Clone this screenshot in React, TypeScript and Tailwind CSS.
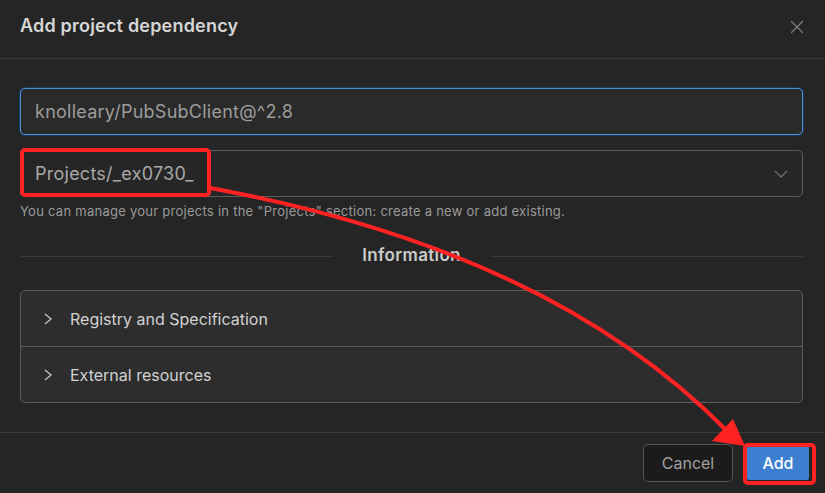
import React from "react";

export default function App() {
  return (
    <div
      className="relative w-[825px] h-[493px] bg-[#252525] overflow-hidden flex flex-col"
      style={{ fontFamily: "Inter, 'Noto Sans', sans-serif" }}
    >
      {/* Header */}
      <div className="h-[59px] shrink-0 flex items-center justify-between pl-5 pr-[20px] pb-[8px] border-b border-[#3a3a3a]">
        <div className="text-[18px] font-semibold text-[#d6d6d6] tracking-[0.2px]">Add project dependency</div>
        <svg width="14" height="14" viewBox="0 0 14 14" className="mr-[1px] mt-[4px]">
          <path d="M1.5 1.5 L12.5 12.5 M12.5 1.5 L1.5 12.5" stroke="#7a7a7a" strokeWidth="1.4" strokeLinecap="round" />
        </svg>
      </div>

      {/* Body */}
      <div className="flex-1 flex flex-col pl-5 pr-[22px] pt-[29px]">
        <div className="h-[47px] rounded-[5px] border border-[#4b8fdb] bg-[#2a2a2a] shadow-[0_0_0_1px_#1f3a5c] flex items-center pl-[14px]">
          <span className="text-[18px] text-[#9c9c9c] tracking-[0.25px]">knolleary/PubSubClient@^2.8</span>
        </div>

        <div className="mt-[15px] h-[47px] rounded-[5px] border border-[#5c5c5c] bg-[#262626] flex items-center justify-between pl-[14px] pr-[14px]">
          <span className="text-[18px] text-[#a8a8a8] tracking-[0.25px]">Projects/_ex0730_</span>
          <svg width="14" height="8" viewBox="0 0 14 8">
            <path d="M1 1 L7 7 L13 1" fill="none" stroke="#707070" strokeWidth="1.3" />
          </svg>
        </div>

        <div className="mt-[6px] text-[13px] leading-[16px] text-[#9a9a9a] tracking-[0.26px]">
          You can manage your projects in the "Projects" section: create a new or add existing.
        </div>

        <div className="mt-[25px] h-[24px] flex items-center">
          <div className="flex-1 h-px bg-[#3a3a3a]" />
          <div className="px-[29px] text-[17px] font-semibold text-[#cbcbcb] tracking-[0.35px]">Information</div>
          <div className="flex-1 h-px bg-[#3a3a3a]" />
        </div>

        <div className="mt-[22px] rounded-[5px] border border-[#5c5c5c] bg-[#2d2d2d] flex flex-col">
          <div className="h-[56px] flex items-center pl-[22px] border-b border-[#5c5c5c]">
            <svg width="10" height="12" viewBox="0 0 10 12">
              <path d="M2 1 L8 6 L2 11" fill="none" stroke="#c8c8c8" strokeWidth="1.3" />
            </svg>
            <span className="ml-[17px] text-[16px] text-[#d2d2d2]">Registry and Specification</span>
          </div>
          <div className="h-[55px] flex items-center pl-[22px]">
            <svg width="10" height="12" viewBox="0 0 10 12">
              <path d="M2 1 L8 6 L2 11" fill="none" stroke="#c8c8c8" strokeWidth="1.3" />
            </svg>
            <span className="ml-[17px] text-[16px] text-[#d2d2d2]">External resources</span>
          </div>
        </div>
      </div>

      {/* Footer */}
      <div className="h-[61px] shrink-0 border-t border-[#3a3a3a] flex items-center justify-end gap-[14px] pr-[16px]">
        <button className="h-[38px] w-[90px] rounded-[5px] border border-[#555555] bg-[#1b1b1b] text-[16px] text-[#a0a0a0]">
          Cancel
        </button>
        <button className="h-[34px] w-[62px] rounded-[2px] bg-[#3d7fd0] text-[16px] font-medium text-white">
          Add
        </button>
      </div>

      {/* Annotations */}
      <div className="absolute left-[20px] top-[148px] w-[191px] h-[49px] border-[4px] border-[#ff2222] rounded-[5px] pointer-events-none" />
      <div className="absolute left-[743px] top-[443px] w-[73px] h-[42px] border-[4px] border-[#ff2222] rounded-[5px] pointer-events-none" />
      <svg className="absolute left-0 top-0 pointer-events-none" width="825" height="493" viewBox="0 0 825 493">
        <path d="M210 188 Q 550 250 728 432" fill="none" stroke="#ff2222" strokeWidth="4" />
        <polygon points="745,446 712,441 733,419" fill="#ff2222" />
      </svg>
    </div>
  );
}
